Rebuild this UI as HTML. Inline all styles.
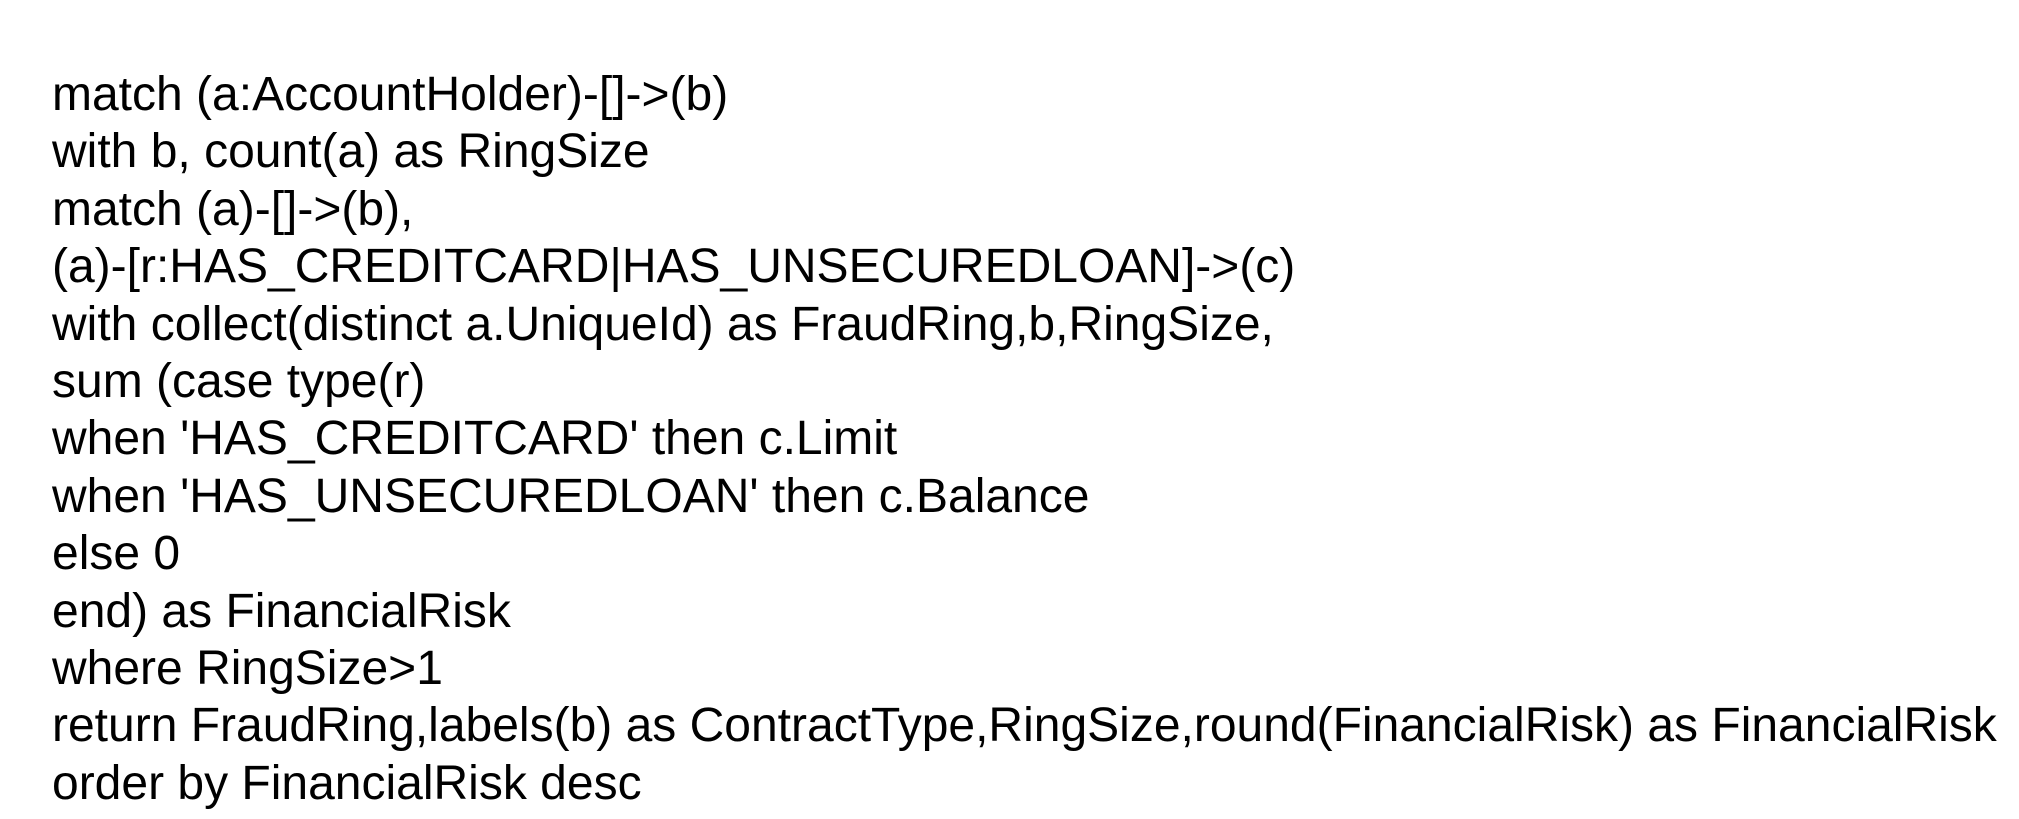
<!DOCTYPE html>
<html><head><meta charset="utf-8"><style>
html,body{margin:0;padding:0;background:#fff;}
body{width:2019px;height:819px;overflow:hidden;position:relative;}
pre{position:absolute;left:52px;top:66px;margin:0;font-family:"Liberation Sans",Arial,sans-serif;font-size:48px;line-height:57.4px;color:#000;white-space:pre;}
</style></head><body>
<pre>match (a:AccountHolder)-[]-&gt;(b)
with b, count(a) as RingSize
match (a)-[]-&gt;(b),
(a)-[r:HAS_CREDITCARD|HAS_UNSECUREDLOAN]-&gt;(c)
with collect(distinct a.UniqueId) as FraudRing,b,RingSize,
sum (case type(r)
when 'HAS_CREDITCARD' then c.Limit
when 'HAS_UNSECUREDLOAN' then c.Balance
else 0
end) as FinancialRisk
where RingSize&gt;1
return FraudRing,labels(b) as ContractType,RingSize,round(FinancialRisk) as FinancialRisk
order by FinancialRisk desc</pre>
</body></html>
